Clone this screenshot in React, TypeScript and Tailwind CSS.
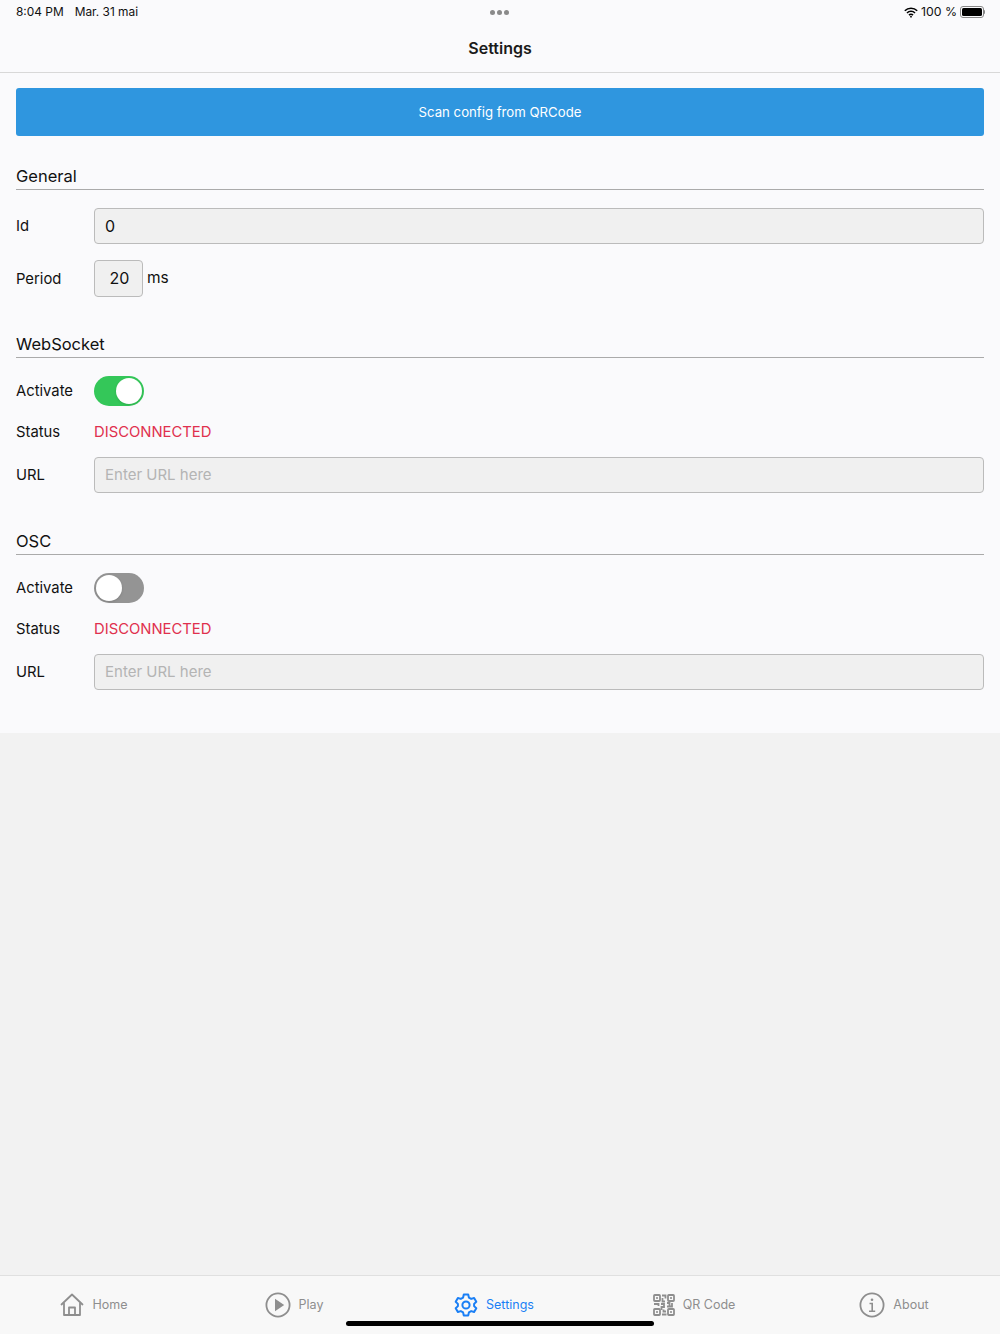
import React from 'react';

const font = { fontFamily: 'Inter, "Liberation Sans", sans-serif' };

const Row: React.FC<{ label: string; className?: string; children: React.ReactNode }> = ({ label, className, children }) => (
  <div className={`flex items-center ${className ?? ''}`}>
    <span className="w-[78px] shrink-0 text-[14.8px] leading-[20px] text-[#111]">{label}</span>
    {children}
  </div>
);

const Heading: React.FC<{ title: string; className?: string }> = ({ title, className }) => (
  <div className={`h-[30px] border-b border-[#aaa] pt-[3px] text-[16.5px] leading-[26px] text-[#111] ${className ?? ''}`}>{title}</div>
);

const Field: React.FC<{ value?: string; placeholder?: string }> = ({ value, placeholder }) => (
  <div className={`flex h-[36px] flex-1 items-center rounded-[4px] border border-[#bbb] bg-[#f0f0f0] px-[10px] ${value ? 'text-[16px] text-[#111]' : 'text-[15px] text-[#b4b4b4]'}`}>
    {value ?? placeholder}
  </div>
);

const Toggle: React.FC<{ on: boolean }> = ({ on }) => (
  <div className={`flex h-[30px] w-[50px] items-center rounded-full p-[2px] ${on ? 'justify-end bg-[#34c759]' : 'justify-start bg-[#949494]'}`}>
    <div className="h-[26px] w-[26px] rounded-full bg-white shadow-sm" />
  </div>
);

const Connection: React.FC<{ title: string; on: boolean; className?: string }> = ({ title, on, className }) => (
  <div className={className}>
    <Heading title={title} />
    <Row label="Activate" className="mt-[18px]">
      <Toggle on={on} />
    </Row>
    <Row label="Status" className="mt-[16px]">
      <span className="text-[14.8px] leading-[20px] text-[#e0304e]">DISCONNECTED</span>
    </Row>
    <Row label="URL" className="mt-[15px]">
      <Field placeholder="Enter URL here" />
    </Row>
  </div>
);

const HomeIcon = () => (
  <svg width="24" height="24" viewBox="0 0 24 24" fill="none" stroke="#8e8e8e" strokeWidth="1.8" strokeLinejoin="round" strokeLinecap="round">
    <path d="M1.5 11.500 12 1.500l10.500 10" />
    <path d="M4 10.500v11.500h16V10.500" />
    <path d="M9 22v-7.500h6V22" />
  </svg>
);

const PlayIcon = () => (
  <svg width="26" height="26" viewBox="0 0 26 26" fill="none">
    <circle cx="13" cy="13" r="11.600" stroke="#8e8e8e" strokeWidth="1.800" />
    <path d="M10 6.800 19.200 13 10 19.200Z" fill="#8e8e8e" />
  </svg>
);

const GearIcon = () => (
  <svg width="24" height="24" viewBox="0 0 24 24" fill="none" stroke="#1a7ff5" strokeWidth="2" strokeLinejoin="round">
    <circle cx="12" cy="12" r="3.600" />
    <path d="M9.800 1.600h4.400l.7 3 2.300 1.300 2.900-.9 2.200 3.800-2.200 2.100v2.200l2.200 2.100-2.200 3.800-2.900-.9-2.300 1.300-.7 3H9.800l-.7-3-2.300-1.300-2.900.9-2.200-3.800 2.200-2.100v-2.200L1.700 8.800l2.200-3.800 2.900.9 2.300-1.300z" />
  </svg>
);

const QrIcon = () => (
  <svg width="22" height="22" viewBox="0 0 22 22" fill="none" stroke="#8e8e8e" strokeWidth="1.800">
    <rect x="1" y="1" width="6" height="6" rx="0.800" />
    <rect x="15" y="1" width="6" height="6" rx="0.800" />
    <rect x="1" y="15" width="6" height="6" rx="0.800" />
    <rect x="15" y="15" width="6" height="6" rx="0.800" />
    <path d="M3.200 4h1.600M17.200 4h1.600M3.200 18h1.600M17.200 18h1.600" />
    <path d="M9 1.500h3.500v3M9.500 4v3.500H12M1 10h4.500v2M8 10h3v3H8.500v3M14 9h2.500v2.500M19 9v3.500h-5M10.500 15.500v2h2.500M9 20.500h4.500" />
  </svg>
);

const InfoIcon = () => (
  <svg width="26" height="26" viewBox="0 0 26 26" fill="none" stroke="#8e8e8e">
    <circle cx="13" cy="13" r="11.600" strokeWidth="1.800" />
    <path d="M10.500 11.500H13.200V19M10 19.200h6.200" strokeWidth="1.600" />
    <circle cx="13" cy="7.800" r="1.300" fill="#8e8e8e" stroke="none" />
  </svg>
);

const tabs = [
  { label: 'Home', icon: <HomeIcon />, active: false },
  { label: 'Play', icon: <PlayIcon />, active: false },
  { label: 'Settings', icon: <GearIcon />, active: true },
  { label: 'QR Code', icon: <QrIcon />, active: false },
  { label: 'About', icon: <InfoIcon />, active: false },
];

export default function App() {
  return (
    <div className="relative flex h-[1334px] w-[1000px] flex-col overflow-hidden bg-[#f2f2f2]" style={font}>
      <div className="bg-[#fafafc]">
        {/* status bar + nav title */}
        <div className="h-[73px] border-b border-[#d8d8d8]">
          <div className="flex h-[24px] items-center justify-between pl-[16px] pr-[15px] text-[11.900px] text-[#111]">
            <div className="flex gap-[11px]">
              <span>8:04 PM</span>
              <span>Mar. 31 mai</span>
            </div>
            <div className="flex items-center gap-[3px]">
              <svg width="14" height="11" viewBox="0 0 14 11" fill="none" stroke="#000" strokeWidth="1.600">
                <path d="M.8 3.800a8.800 8.800 0 0 1 12.400 0M3 6a5.600 5.600 0 0 1 8 0M5 8.100a2.800 2.800 0 0 1 4 0" />
                <circle cx="7" cy="9.700" r="0.900" fill="#000" stroke="none" />
              </svg>
              <span className="text-[12.300px]">100 %</span>
              <div className="flex items-center">
                <div className="h-[12px] w-[24px] rounded-[3px] border border-[#888] p-[1px]">
                  <div className="h-full w-full rounded-[1.500px] bg-black" />
                </div>
                <div className="h-[4px] w-[1px] rounded-r-sm bg-[#888]" />
              </div>
            </div>
          </div>
          <div className="flex h-[48px] items-center justify-center text-[16px] font-semibold text-[#1a1a1a]">Settings</div>
        </div>

        <div className="px-[16px] pb-[43px] pt-[15px]">
          <div className="flex h-[48px] items-center justify-center rounded-[3px] bg-[#2f96df] pt-[1px] text-[13.200px] text-white">Scan config from QRCode</div>

          <Heading title="General" className="mt-[24px]" />
          <Row label="Id" className="mt-[18px]">
            <Field value="0" />
          </Row>
          <Row label="Period" className="mt-[16px]">
            <div className="flex h-[37px] w-[49px] items-center justify-center rounded-[4px] border border-[#bbb] bg-[#f0f0f0] pb-[1px] pl-[2px] text-[16px] text-[#111]">20</div>
            <span className="ml-[4px] pb-[1px] text-[15.500px] text-[#111]">ms</span>
          </Row>

          <Connection title="WebSocket" on className="mt-[31px]" />
          <Connection title="OSC" on={false} className="mt-[32px]" />
        </div>
      </div>

      <div className="flex-1" />

      <nav className="flex h-[59px] items-center border-t border-[#e0e0e0] bg-[#f8f8f8]">
        <div className="-ml-[6px] flex">
          {tabs.map((tab) => (
            <div key={tab.label} className="flex w-[200px] shrink-0 items-center justify-center gap-[8px]">
              {tab.icon}
              <span className={`text-[12.500px] ${tab.active ? 'text-[#1a7ff5]' : 'text-[#8e8e8e]'}`}>{tab.label}</span>
            </div>
          ))}
        </div>
      </nav>

      {/* multitasking dots */}
      <div className="absolute left-[490px] top-[10px] flex gap-[2px]">
        <span className="h-[5px] w-[5px] rounded-full bg-[#8a8a8a]" />
        <span className="h-[5px] w-[5px] rounded-full bg-[#8a8a8a]" />
        <span className="h-[5px] w-[5px] rounded-full bg-[#8a8a8a]" />
      </div>
      {/* home indicator */}
      <div className="absolute left-[346px] top-[1321px] h-[5px] w-[308px] rounded-full bg-black" />
    </div>
  );
}
